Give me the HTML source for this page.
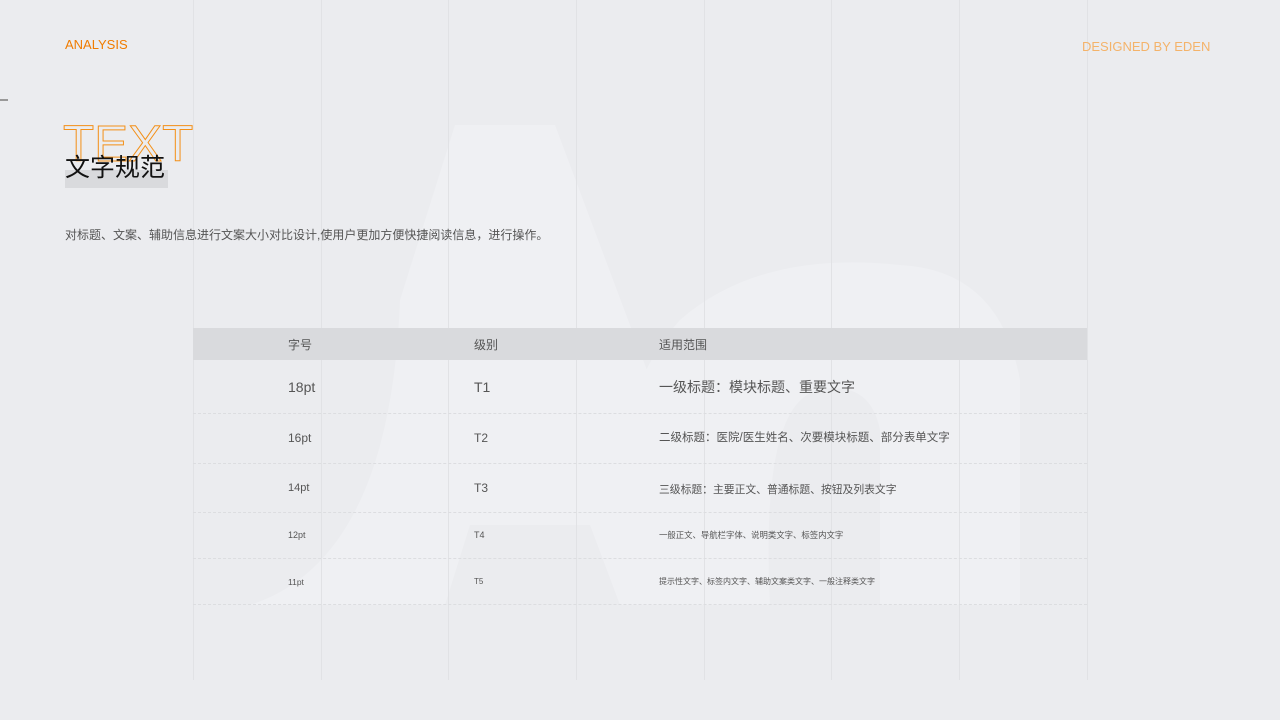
<!DOCTYPE html>
<html><head><meta charset="utf-8"><style>
body{margin:0;width:1280px;height:720px;background:#ebecef;position:relative;overflow:hidden;font-family:"Liberation Sans","Noto Sans CJK SC",sans-serif;}
.v{position:absolute;top:0;height:680px;width:1px;background:#e1e2e5}
.t{position:absolute;white-space:nowrap;color:#555}
.hr{position:absolute;left:193px;width:894px;border-top:1px dashed #dcdde0}
</style></head><body>
<svg style="position:absolute;left:0;top:0" width="1280" height="720">
<path d="M455 125 L555 125 L735 605 L620 605 L590 525 L470 525 L445 605 L250 605 Q390 560 400 300 Z" fill="#eff0f3"/>
<path d="M640 605 Q590 420 680 320 Q760 250 900 265 Q1000 270 1020 380 L1020 605 L880 605 L880 430 Q870 380 820 390 Q760 400 770 605 Z" fill="#eff0f3"/>
</svg>
<div class="v" style="left:193px"></div><div class="v" style="left:321px"></div><div class="v" style="left:448px"></div><div class="v" style="left:576px"></div><div class="v" style="left:704px"></div><div class="v" style="left:831px"></div><div class="v" style="left:959px"></div><div class="v" style="left:1087px"></div>
<div class="t" style="left:65px;top:37px;font-size:13px;color:#f07c00">ANALYSIS</div>
<div class="t" style="left:1082px;top:39px;font-size:13px;color:#f4b36a">DESIGNED BY EDEN</div>
<div style="position:absolute;left:0;top:99px;width:8px;height:2px;background:#999"></div>
<div class="t" style="left:63px;top:116px;font-size:51px;line-height:56px;color:transparent;-webkit-text-stroke:1px #f39019">TEXT</div>
<div style="position:absolute;left:65px;top:170px;width:103px;height:18px;background:#d9dadd"></div>
<div class="t" style="left:65px;top:151px;font-size:25px;line-height:34px;color:#111">文字规范</div>
<div class="t" style="left:65px;top:226px;font-size:12px;color:#555">对标题、文案、辅助信息进行文案大小对比设计,使用户更加方便快捷阅读信息，进行操作。</div>
<div style="position:absolute;left:193px;top:328px;width:894px;height:32px;background:#d9dadd"></div>
<div class="t" style="left:288px;top:336px;font-size:12px">字号</div>
<div class="t" style="left:474px;top:336px;font-size:12px">级别</div>
<div class="t" style="left:659px;top:336px;font-size:12px">适用范围</div>
<div class="t" style="left:288px;top:379px;font-size:14px">18pt</div>
<div class="t" style="left:474px;top:379px;font-size:14px">T1</div>
<div class="t" style="left:659px;top:377px;font-size:14px">一级标题：模块标题、重要文字</div>
<div class="hr" style="top:413px"></div>
<div class="t" style="left:288px;top:431px;font-size:12px">16pt</div>
<div class="t" style="left:474px;top:431px;font-size:12px">T2</div>
<div class="t" style="left:659px;top:429px;font-size:11.5px">二级标题：医院/医生姓名、次要模块标题、部分表单文字</div>
<div class="hr" style="top:463px"></div>
<div class="t" style="left:288px;top:482px;font-size:11px">14pt</div>
<div class="t" style="left:474px;top:481px;font-size:12px">T3</div>
<div class="t" style="left:659px;top:481px;font-size:10.8px">三级标题：主要正文、普通标题、按钮及列表文字</div>
<div class="hr" style="top:512px"></div>
<div class="t" style="left:288px;top:530px;font-size:9px">12pt</div>
<div class="t" style="left:474px;top:530px;font-size:9px">T4</div>
<div class="t" style="left:659px;top:529px;font-size:8.4px">一般正文、导航栏字体、说明类文字、标签内文字</div>
<div class="hr" style="top:558px"></div>
<div class="t" style="left:288px;top:577px;font-size:8.5px">11pt</div>
<div class="t" style="left:474px;top:577px;font-size:8px">T5</div>
<div class="t" style="left:659px;top:576px;font-size:8px">提示性文字、标签内文字、辅助文案类文字、一般注释类文字</div>
<div class="hr" style="top:604px"></div>
</body></html>
